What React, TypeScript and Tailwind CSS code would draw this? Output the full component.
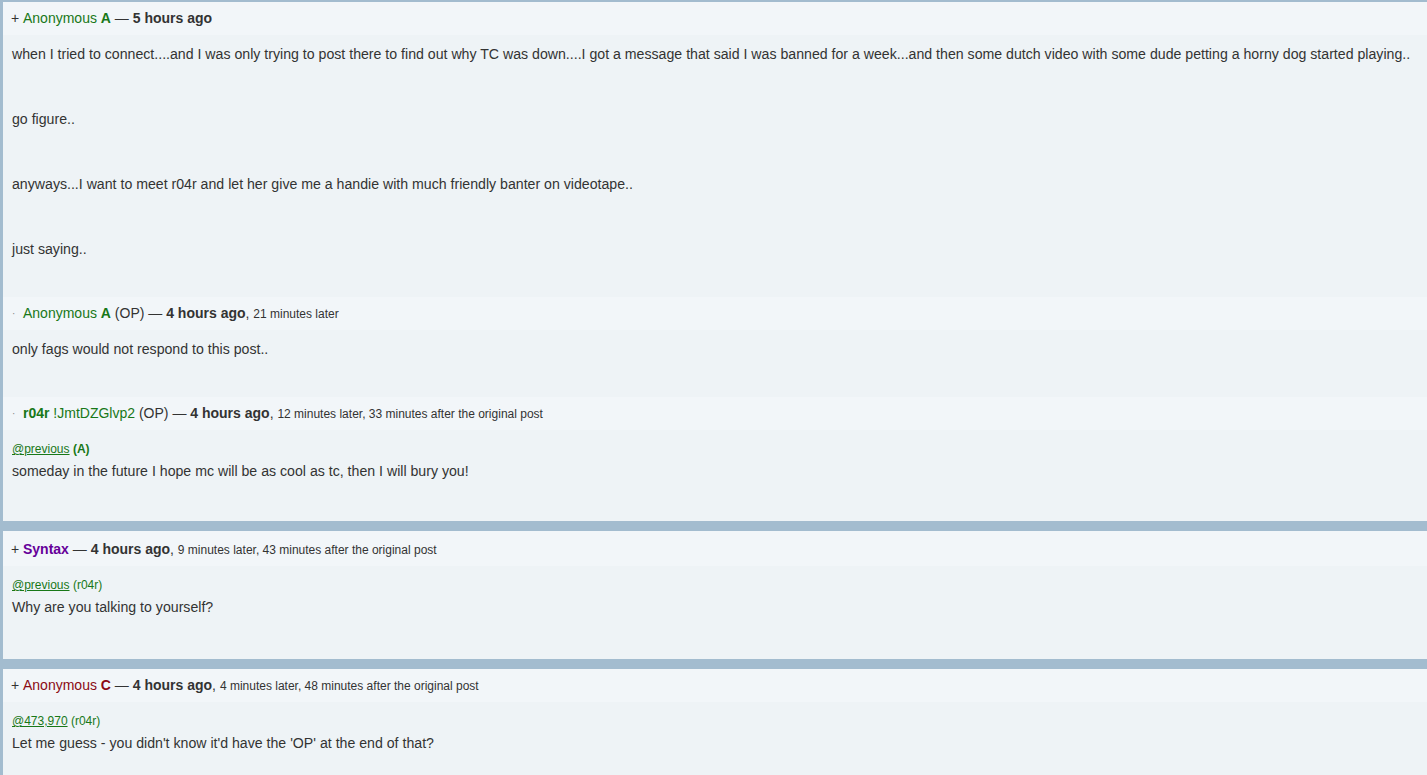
import type { ReactNode } from "react";

const FONT = { fontFamily: '"Liberation Sans", Arial, sans-serif' };

function Header({ marker, tall, children }: { marker: "+" | "·"; tall?: boolean; children: ReactNode }) {
  return (
    <div
      className={`${tall ? "h-[35px] pt-[2px]" : "h-[33px]"} flex items-center pl-[8px] bg-[#f2f6f9] text-[14px] text-[#333]`}
    >
      {marker === "+" ? (
        <span className="w-[12px] text-[#333]">+</span>
      ) : (
        <span className="w-[12px] pl-[1px] text-[#888] text-[10px]">·</span>
      )}
      <span className="whitespace-nowrap">{children}</span>
    </div>
  );
}

function Small({ children }: { children: ReactNode }) {
  return <span className="text-[12px]">{children}</span>;
}

function Quote({ target, who, bold }: { target: string; who: string; bold?: boolean }) {
  return (
    <div className="text-[12px] leading-[16px] text-[#187818]">
      <span className="underline">{target}</span>{" "}
      <span className={bold ? "font-bold" : ""}>({who})</span>
    </div>
  );
}

function Body({ pb = "pb-[40px]", children }: { pb?: string; children: ReactNode }) {
  return (
    <div className={`bg-[#eef3f6] pl-[9px] pr-[10px] pt-[11px] ${pb} text-[14.15px] leading-[16px] text-[#333]`}>
      {children}
    </div>
  );
}

export default function App() {
  return (
    <div className="min-h-screen bg-[#a3bccf] pt-[2px] pl-[3px] flex flex-col gap-[10px]" style={FONT}>
      {/* Thread 1 with replies */}
      <div className="bg-[#eef3f6]">
        <Header marker="+">
          <span className="text-[#187818]">
            Anonymous <b>A</b>
          </span>{" "}
          — <b>5 hours ago</b>
        </Header>
        <Body pb="pb-[40px]">
          <div className="flex flex-col gap-[49px]">
            <p>
              when I tried to connect....and I was only trying to post there to find out why TC was down....I got a
              message that said I was banned for a week...and then some dutch video with some dude petting a horny dog
              started playing..
            </p>
            <p>go figure..</p>
            <p>anyways...I want to meet r04r and let her give me a handie with much friendly banter on videotape..</p>
            <p>just saying..</p>
          </div>
        </Body>

        <Header marker="·">
          <span className="text-[#187818]">
            Anonymous <b>A</b>
          </span>{" "}
          (OP) — <b>4 hours ago</b>, <Small>21 minutes later</Small>
        </Header>
        <Body pb="pb-[40px]">
          <p>only fags would not respond to this post..</p>
        </Body>

        <Header marker="·">
          <span className="text-[#187818]">
            <b>r04r</b> !JmtDZGlvp2
          </span>{" "}
          (OP) — <b>4 hours ago</b>, <Small>12 minutes later, 33 minutes after the original post</Small>
        </Header>
        <Body pb="pb-[42px]">
          <Quote target="@previous" who="A" bold />
          <p className="mt-[6px]">someday in the future I hope mc will be as cool as tc, then I will bury you!</p>
        </Body>
      </div>

      {/* Syntax */}
      <div className="bg-[#eef3f6]">
        <Header marker="+" tall>
          <b className="text-[#660099]">Syntax</b> — <b>4 hours ago</b>,{" "}
          <Small>9 minutes later, 43 minutes after the original post</Small>
        </Header>
        <Body pb="pb-[44px]">
          <Quote target="@previous" who="r04r" />
          <p className="mt-[6px]">Why are you talking to yourself?</p>
        </Body>
      </div>

      {/* Anonymous C */}
      <div className="bg-[#eef3f6]">
        <Header marker="+">
          <span className="text-[#8b0a14]">
            Anonymous <b>C</b>
          </span>{" "}
          — <b>4 hours ago</b>, <Small>4 minutes later, 48 minutes after the original post</Small>
        </Header>
        <Body>
          <Quote target="@473,970" who="r04r" />
          <p className="mt-[6px]">Let me guess - you didn't know it'd have the 'OP' at the end of that?</p>
        </Body>
      </div>
    </div>
  );
}
